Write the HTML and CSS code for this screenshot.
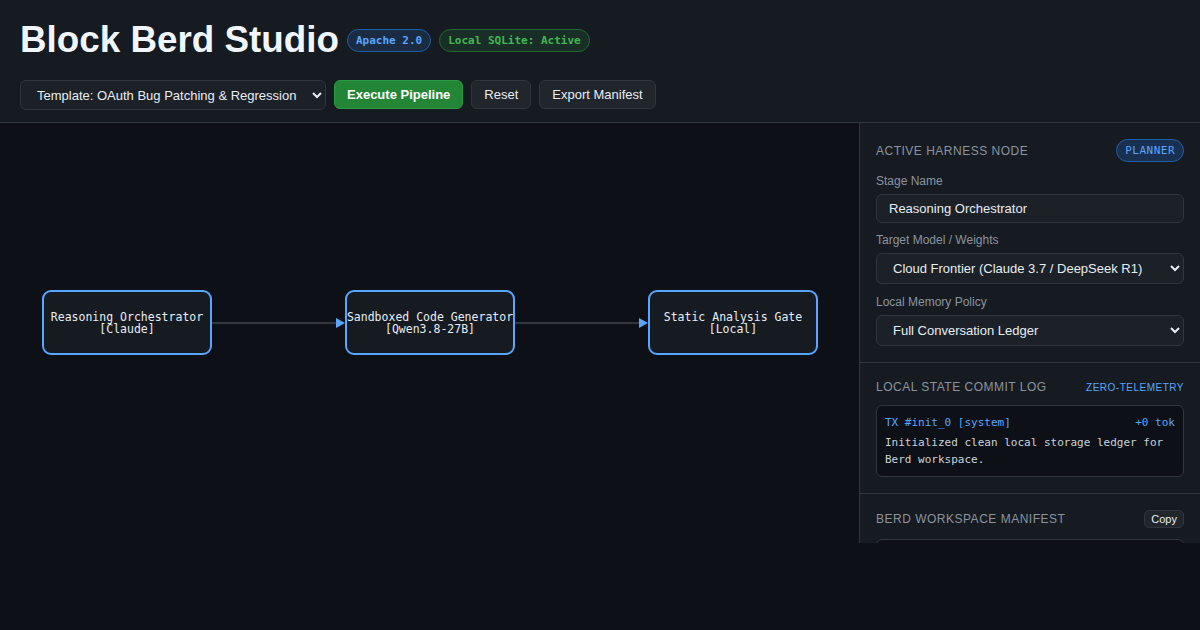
FILE: index.html
```html
<!DOCTYPE html>
<html lang="en">
<head>
    <meta charset="UTF-8">
    <meta name="viewport" content="width=device-width, initial-scale=1.0">
    <title>Block Berd Studio</title>
    <link rel="stylesheet" href="styles.css">
</head>
<body>

    <header class="topbar">
        <div class="title-row">
            <h1>Block Berd Studio</h1>
            <span class="badge badge-blue">Apache 2.0</span>
            <span class="badge badge-green">Local SQLite: Active</span>
        </div>
        <div class="toolbar">
            <select class="template-select">
                <option>Template: OAuth Bug Patching &amp; Regression</option>
            </select>
            <button class="btn btn-primary">Execute Pipeline</button>
            <button class="btn">Reset</button>
            <button class="btn">Export Manifest</button>
        </div>
    </header>

    <main class="workspace">
        <!-- pipeline graph -->
        <div class="canvas">
            <div class="node">Reasoning Orchestrator<br>[Claude]</div>
            <div class="edge"><span class="edge-line"></span><span class="edge-head"></span></div>
            <div class="node">Sandboxed Code Generator<br>[Qwen3.8-27B]</div>
            <div class="edge"><span class="edge-line"></span><span class="edge-head"></span></div>
            <div class="node">Static Analysis Gate<br>[Local]</div>
        </div>

        <aside class="sidebar">
            <section class="panel">
                <div class="panel-head">
                    <h2>Active Harness Node</h2>
                    <span class="role-badge">PLANNER</span>
                </div>
                <div class="field">
                    <label for="stageName">Stage Name</label>
                    <input type="text" id="stageName" value="Reasoning Orchestrator">
                </div>
                <div class="field">
                    <label for="modelSelect">Target Model / Weights</label>
                    <select id="modelSelect">
                        <option>Cloud Frontier (Claude 3.7 / DeepSeek R1)</option>
                    </select>
                </div>
                <div class="field">
                    <label for="memorySelect">Local Memory Policy</label>
                    <select id="memorySelect">
                        <option>Full Conversation Ledger</option>
                    </select>
                </div>
            </section>

            <section class="panel">
                <div class="panel-head">
                    <h2>Local State Commit Log</h2>
                    <span class="tag-link">ZERO-TELEMETRY</span>
                </div>
                <div class="log">
                    <div class="log-entry">
                        <div class="log-meta"><span>TX #init_0 [system]</span><span>+0 tok</span></div>
                        <div class="log-text">Initialized clean local storage ledger for Berd workspace.</div>
                    </div>
                </div>
            </section>

            <section class="panel">
                <div class="panel-head">
                    <h2>Berd Workspace Manifest</h2>
                    <button class="copy-btn">Copy</button>
                </div>
                
                <pre class="manifest" id="manifestOut"></pre>
            </section>
        </aside>
    </main>

</body>
</html>
```

FILE: styles.css
```css
body {
    margin: 0;
    background-color: #0d1117;
    color: #e6edf3;
    font-family: "Liberation Sans", Arial, sans-serif;
}

.topbar {
    background-color: #161b22;
    padding: 16px 20px 12px;
    border-bottom: 1px solid #30363d;
}
.title-row {
    display: flex;
    align-items: center;
    gap: 8px;
    height: 48px;
}
.title-row h1 {
    margin: 0;
    font-size: 36.8px;
    line-height: 48px;
    font-weight: bold;
    color: #f0f6fc;
}
.badge {
    font-family: "DejaVu Sans Mono", monospace;
    font-size: 11px;
    font-weight: bold;
    padding: 0 8px;
    height: 21px;
    line-height: 21px;
    border-radius: 12px;
}
.badge-blue {
    color: #58a6ff;
    background: rgba(56, 139, 253, 0.15);
    border: 1px solid #1f5fa8;
}
.badge-green {
    color: #3fb950;
    background: rgba(46, 160, 67, 0.15);
    border: 1px solid #1f6a2e;
}

.toolbar {
    display: flex;
    gap: 8px;
    margin-top: 16px;
    height: 30px;
}
.template-select {
    width: 306px;
    height: 30px;
    padding: 0 8px 0 12px;
    font-family: "Liberation Sans", Arial, sans-serif;
    font-size: 13px;
    color: #e6edf3;
    background-color: #1c2128;
    border: 1px solid #30363d;
    border-radius: 6px;
    color-scheme: dark;
}
.btn {
    height: 29px;
    padding: 0 12px;
    font-family: "Liberation Sans", Arial, sans-serif;
    font-size: 13px;
    color: #e6edf3;
    background-color: #21262d;
    border: 1px solid #30363d;
    border-radius: 6px;
    cursor: pointer;
}
.btn-primary {
    background-color: #238636;
    border-color: #2b9a42;
    color: #ffffff;
    font-weight: bold;
}

.workspace {
    display: flex;
    height: 420px;
}
.canvas {
    flex: 1;
    display: flex;
    align-items: center;
    padding: 0 0 21px 42px;
}
.node {
    box-sizing: border-box;
    width: 170px;
    height: 65px;
    flex-shrink: 0;
    display: flex;
    align-items: center;
    justify-content: center;
    text-align: center;
    white-space: nowrap;
    font-family: "DejaVu Sans Mono", monospace;
    font-size: 11.5px;
    line-height: 12px;
    color: #e6edf3;
    background-color: #161b22;
    border: 2px solid #58a6ff;
    border-radius: 9px;
    padding-bottom: 0;
}
.edge {
    width: 133px;
    display: flex;
    align-items: center;
}
.edge-line {
    flex: 1;
    height: 2px;
    background-color: #30363d;
}
.edge-head {
    width: 0;
    height: 0;
    border-top: 5px solid transparent;
    border-bottom: 5px solid transparent;
    border-left: 9px solid #58a6ff;
}

.sidebar {
    width: 340px;
    background-color: #161b22;
    border-left: 1px solid #30363d;
    overflow: hidden;
}
.panel {
    padding: 16px;
    border-bottom: 1px solid #30363d;
}
.panel-head {
    display: flex;
    justify-content: space-between;
    align-items: center;
    margin-bottom: 11px;
}
.panel-head h2 {
    margin: 0;
    font-size: 12px;
    font-weight: normal;
    text-transform: uppercase;
    letter-spacing: 0.5px;
    color: #8b949e;
}
.role-badge {
    font-family: "DejaVu Sans Mono", monospace;
    font-size: 11px;
    letter-spacing: 0.5px;
    color: #58a6ff;
    background: #1a3050;
    border: 1px solid #1f5fa8;
    border-radius: 12px;
    padding: 0 8px;
    height: 21px;
    line-height: 21px;
}
.field {
    margin-bottom: 10px;
}
.field:last-child {
    margin-bottom: 0;
}
.field label {
    display: block;
    font-size: 12px;
    line-height: 16px;
    color: #8b949e;
    margin-bottom: 5px;
}
.field input, .field select {
    box-sizing: border-box;
    width: 100%;
    font-family: "Liberation Sans", Arial, sans-serif;
    font-size: 13px;
    color: #e6edf3;
    background-color: #1c2128;
    border: 1px solid #30363d;
    border-radius: 6px;
}
.field input {
    height: 29px;
    padding: 0 12px;
}
.field select {
    height: 31px;
    padding: 0 12px;
    color-scheme: dark;
}
.field:nth-child(3) label {
    margin-top: -1px;
}

.tag-link {
    font-size: 10px;
    letter-spacing: 0.5px;
    color: #58a6ff;
}
.panel:nth-child(2) {
    padding-top: 15px;
}
.panel:nth-child(2) .panel-head {
    margin: 2px 0 11px;
}
.log {
    background-color: #0d1117;
    border: 1px solid #30363d;
    border-radius: 6px;
    padding: 9px 8px 8px;
}
.log-meta {
    display: flex;
    justify-content: space-between;
    font-family: "DejaVu Sans Mono", monospace;
    font-size: 11px;
    line-height: 16px;
    color: #58a6ff;
    margin-bottom: 3px;
}
.log-text {
    font-family: "DejaVu Sans Mono", monospace;
    font-size: 11px;
    line-height: 17px;
    color: #c9d1d9;
}
.copy-btn {
    font-family: "Liberation Sans", Arial, sans-serif;
    font-size: 11px;
    color: #e6edf3;
    background-color: #21262d;
    border: 1px solid #30363d;
    border-radius: 5px;
    padding: 2px 6px;
    cursor: pointer;
}
.manifest {
    margin: 0;
    min-height: 80px;
    background-color: #0d1117;
    border: 1px solid #30363d;
    border-radius: 6px;
    padding: 8px;
    font-family: "DejaVu Sans Mono", monospace;
    font-size: 11px;
    color: #c9d1d9;
}
```
